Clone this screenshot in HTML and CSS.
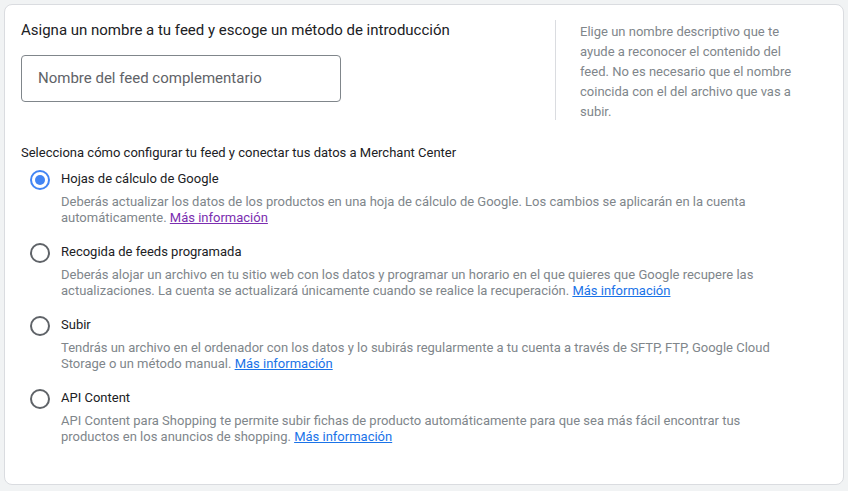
FILE: index.html
```html
<!DOCTYPE html>
<html lang="es">
<head>
<meta charset="utf-8">
<link rel="stylesheet" href="styles.css">
</head>
<body>
<div class="card">
  <div class="top">
    <div class="name-col">
      <div class="title">Asigna un nombre a tu feed y escoge un método de introducción</div>
      <div class="input">Nombre del feed complementario</div>
    </div>
    <div class="help">Elige un nombre descriptivo que te ayude a reconocer el contenido del feed. No es necesario que el nombre coincida con el del archivo que vas a subir.</div>
  </div>
  <div class="select-title">Selecciona cómo configurar tu feed y conectar tus datos a Merchant Center</div>
  <div class="options">
    <div class="option">
      <span class="radio checked"></span>
      <div class="opt-body">
        <div class="opt-label">Hojas de cálculo de Google</div>
        <div class="opt-desc">Deberás actualizar los datos de los productos en una hoja de cálculo de Google. Los cambios se aplicarán en la cuenta automáticamente. <a class="link visited" href="#">Más información</a></div>
      </div>
    </div>
    <div class="option">
      <span class="radio"></span>
      <div class="opt-body">
        <div class="opt-label">Recogida de feeds programada</div>
        <div class="opt-desc">Deberás alojar un archivo en tu sitio web con los datos y programar un horario en el que quieres que Google recupere las actualizaciones. La cuenta se actualizará únicamente cuando se realice la recuperación. <a class="link" href="#">Más información</a></div>
      </div>
    </div>
    <div class="option">
      <span class="radio"></span>
      <div class="opt-body">
        <div class="opt-label">Subir</div>
        <div class="opt-desc">Tendrás un archivo en el ordenador con los datos y lo subirás regularmente a tu cuenta a través de SFTP, FTP, Google Cloud Storage o un método manual. <a class="link" href="#">Más información</a></div>
      </div>
    </div>
    <div class="option">
      <span class="radio"></span>
      <div class="opt-body">
        <div class="opt-label">API Content</div>
        <div class="opt-desc">API Content para Shopping te permite subir fichas de producto automáticamente para que sea más fácil encontrar tus productos en los anuncios de shopping. <a class="link" href="#">Más información</a></div>
      </div>
    </div>
  </div>
</div>
</body>
</html>
```

FILE: styles.css
```css
html, body {
  margin: 0;
  padding: 0;
}
body {
  background: #f1f3f4;
  font-family: Roboto, "Noto Sans", sans-serif;
  color: #202124;
  width: 848px;
  height: 491px;
  overflow: hidden;
}
.card {
  margin: 4px 4px 0 4px;
  height: 481px;
  box-sizing: border-box;
  background: #fff;
  border: 1px solid #dadce0;
  border-radius: 8px;
  padding: 14px 16px 0 16px;
}
.top {
  display: flex;
}
.name-col {
  width: 534px;
  border-right: 1px solid #dadce0;
  height: 100px;
  margin-top: 1px;
}
.title {
  font-size: 15px;
  line-height: 20px;
  color: #202124;
}
.input {
  margin-top: 15px;
  width: 320px;
  height: 47px;
  box-sizing: border-box;
  border: 1px solid #80868b;
  border-radius: 4px;
  padding-left: 16px;
  font-size: 15px;
  line-height: 45px;
  color: #5f6368;
}
.help {
  margin-left: 24px;
  width: 225px;
  font-size: 13px;
  line-height: 20px;
  color: #80868b;
  margin-top: 3px;
}
.select-title {
  margin-top: 21px;
  font-size: 13px;
  line-height: 20px;
  color: #202124;
}
.options {
  display: flex;
  flex-direction: column;
  gap: 17px;
  margin-top: 7px;
}
.option {
  display: flex;
  align-items: flex-start;
}
.radio {
  flex: none;
  width: 20px;
  height: 20px;
  box-sizing: border-box;
  border: 2px solid #5f6368;
  border-radius: 50%;
  margin-left: 9px;
  margin-right: 11px;
  position: relative;
}
.radio.checked {
  border-color: #4285f4;
}
.radio.checked::after {
  content: "";
  position: absolute;
  left: 3px;
  top: 3px;
  width: 10px;
  height: 10px;
  border-radius: 50%;
  background: #4285f4;
}
.opt-label {
  font-size: 13px;
  line-height: 18px;
  color: #202124;
}
.opt-desc {
  margin-top: 6px;
  font-size: 13px;
  line-height: 16px;
  color: #80868b;
  width: 720px;
}
.link {
  color: #1a73e8;
  text-decoration: underline;
}
.link.visited {
  color: #7b2eb0;
}
```
